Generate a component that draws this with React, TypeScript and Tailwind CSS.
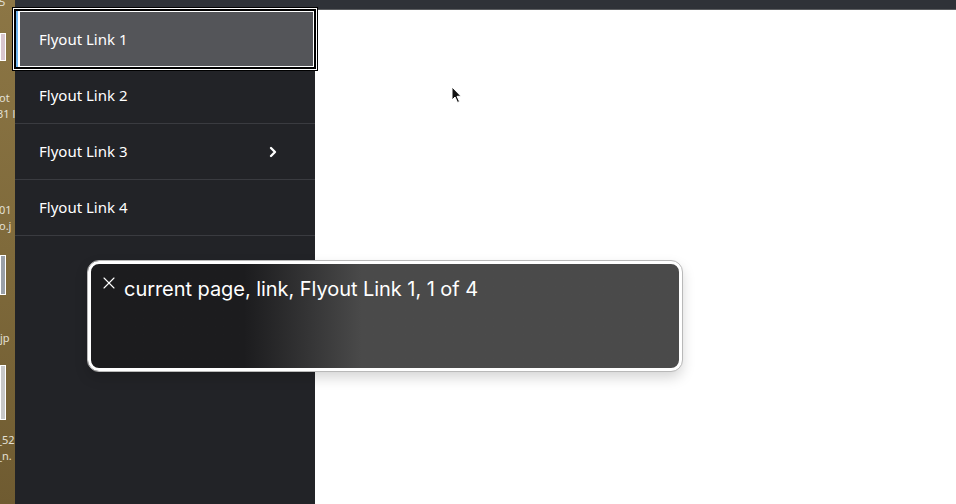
import { ChevronRight, X } from "lucide-react";

const links = [
  { label: "Flyout Link 2", sub: false },
  { label: "Flyout Link 3", sub: true },
  { label: "Flyout Link 4", sub: false },
];

const DesktopStrip = () => (
  <div className="w-[15px] shrink-0 h-full bg-gradient-to-b from-[#8c7645] via-[#7f6a3b] to-[#6f5b31] overflow-hidden flex flex-col text-[11px] leading-[16px] text-[#e4e0d6] font-['Noto_Sans',sans-serif] whitespace-nowrap">
    <span className="-mt-[6px] -ml-[1px]">5</span>
    <div className="mt-[23px] w-[6px] h-[28px] bg-[#d9c6cf] border border-white" />
    <span className="mt-[29px] -ml-[1px]">ot</span>
    <span className="-ml-[3px]">31 l</span>
    <span className="mt-[80px] -ml-[1px]">01</span>
    <span className="-ml-[1px]">o.j</span>
    <div className="mt-[21px] w-[6px] h-[40px] bg-[#9aa0a8] border border-white" />
    <span className="mt-[35px] -ml-[3px]">.jp</span>
    <div className="mt-[19px] w-[6px] h-[55px] bg-[#c8c8c8] border border-white" />
    <span className="mt-[12px] -ml-[3px]">_52</span>
    <span className="-ml-[3px]">_n.</span>
  </div>
);

const Cursor = () => (
  <svg width="12" height="18" viewBox="0 0 12 18" className="absolute left-[451px] top-[86px]">
    <path d="M1 1 L1 14 L4 11 L6.5 16.5 L8.5 15.5 L6 10.3 L10 10.3 Z" fill="#111" stroke="#fff" strokeWidth="1" strokeLinejoin="round" />
  </svg>
);

export default function App() {
  return (
    <div className="relative w-[956px] h-[504px] overflow-hidden flex bg-white font-['Noto_Sans',sans-serif]">
      <DesktopStrip />
      <div className="flex-1 flex flex-col">
        <div className="h-[10px] bg-[#2f3238] border-b border-[#5b5d60]" />
        <div className="flex-1 flex">
          <nav className="w-[300px] bg-[#222327] flex flex-col">
            <div className="relative h-[58px] bg-[#545559] border-l-[3px] border-[#6fb4ec] flex items-center pl-[21px] text-[15px] text-white outline outline-2 -outline-offset-1 outline-black shadow-[inset_0_0_0_2px_#fff,0_0_0_2px_#fff,0_0_0_3px_#000]">
              Flyout Link 1
            </div>
            {links.map((item) => (
              <a
                key={item.label}
                className="h-[56px] border-b border-[#3a3b40] flex items-center justify-between pl-[24px] pr-[34px] text-[15px] text-white"
              >
                {item.label}
                {item.sub && <ChevronRight size={16} strokeWidth={3.5} />}
              </a>
            ))}
          </nav>
          <main className="flex-1 bg-white" />
        </div>
      </div>

      <div className="absolute left-[88px] top-[261px] w-[594px] h-[110px] rounded-[11px] border-[3px] border-white outline outline-1 outline-[#b9b9b9] shadow-[0_6px_14px_rgba(0,0,0,0.18)] bg-gradient-to-r from-[#1c1c1e] from-[26%] to-[#4a4a4a] to-[46%] flex items-start pt-[12px] pl-[8px] gap-[5px]">
        <X size={20} strokeWidth={1.3} className="text-white -mt-[3px]" />
        <span className="text-white text-[20px] leading-[26px] font-['Inter',sans-serif] tracking-[-0.05px]">
          current page, link, Flyout Link 1, 1 of 4
        </span>
      </div>
      <Cursor />
    </div>
  );
}
